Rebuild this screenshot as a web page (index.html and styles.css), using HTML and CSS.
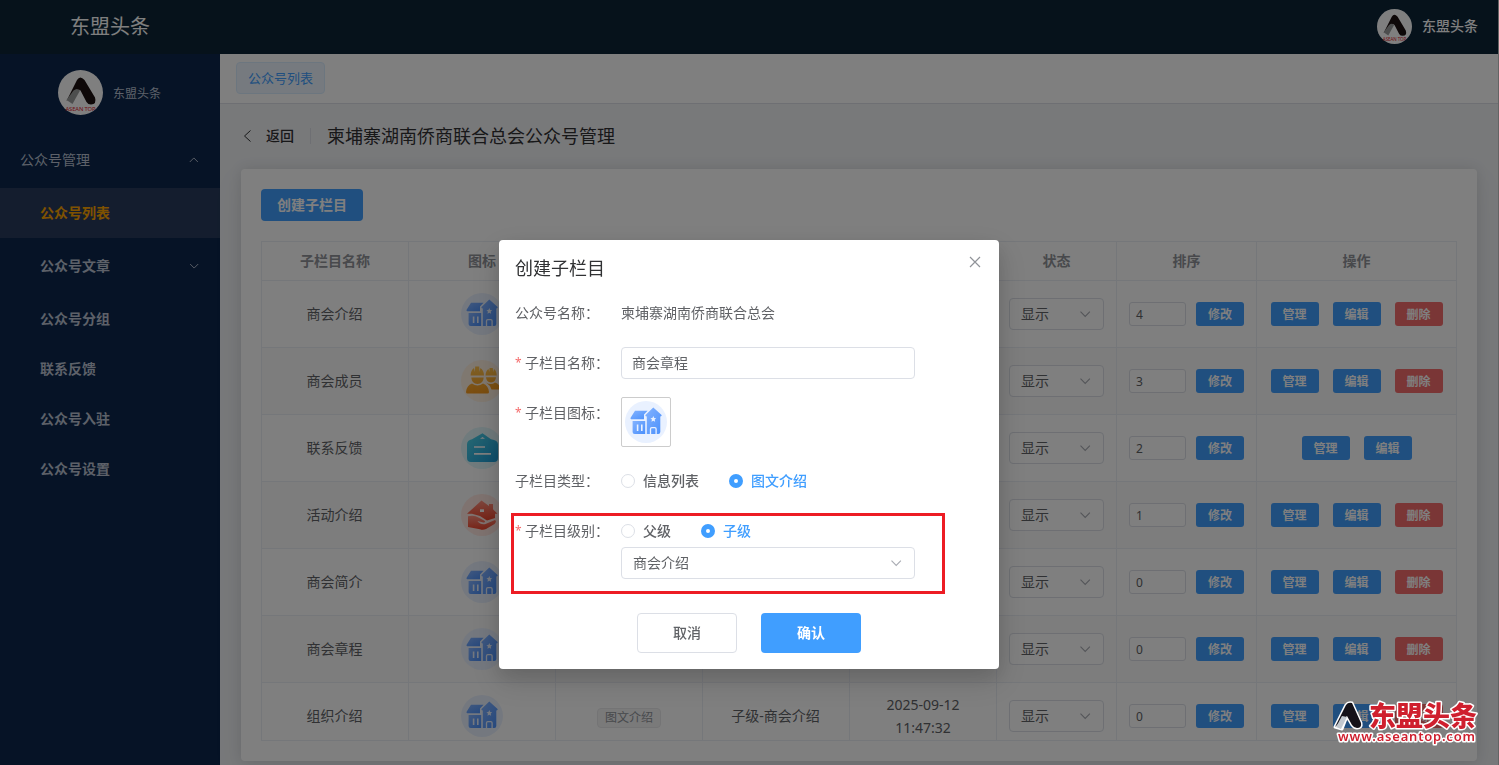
FILE: index.html
```html
<!DOCTYPE html>
<html lang="zh-CN">
<head>
  <meta charset="UTF-8" />
  <meta name="viewport" content="width=device-width, initial-scale=1.0"/>
  <title>东盟头条</title>
  <link rel="stylesheet" href="styles.css">
</head>
<body>
  <!-- 图标 -->
  <svg class="sprite" width="0" height="0">
    <defs>
      <linearGradient id="gBlue" x1="0" y1="0" x2="1" y2="1"><stop offset="0" stop-color="#84b3ff"/><stop offset="1" stop-color="#4a90fc"/></linearGradient>
      <linearGradient id="gYellow" x1="0" y1="0" x2="0" y2="1"><stop offset="0" stop-color="#ffc24d"/><stop offset="1" stop-color="#f79a1c"/></linearGradient>
      <linearGradient id="gTeal" x1="0" y1="0" x2="1" y2="1"><stop offset="0" stop-color="#4fd3e6"/><stop offset="1" stop-color="#1b9bd8"/></linearGradient>
      <linearGradient id="gRed" x1="0" y1="0" x2="0" y2="1"><stop offset="0" stop-color="#ff8f7d"/><stop offset="1" stop-color="#f0452b"/></linearGradient>
    </defs>
    <symbol id="house" viewBox="0 0 42 42">
      <circle cx="21" cy="21" r="21" fill="#e9f1ff"/>
      <path d="M10 9.7h12.6L19 13.5v4.7H6.2q-1-.3-.6-1.4z" fill="url(#gBlue)"/>
      <path d="M7.6 20h12.6v13H9.6q-2 0-2-2z" fill="url(#gBlue)"/>
      <path d="M12.6 23.5v6.5M16.8 23.5v6.5" stroke="#e9f1ff" stroke-width="1.6"/>
      <path d="M28.3 6.4 36.6 14q.5 1.3-1.3 1.4V31q0 2-2 2H21.8V15.4q-2-.2-1.3-1.4z" fill="url(#gBlue)"/>
      <path d="m28.3 15 .9 1.9 2 .3-1.5 1.4.4 2.1-1.8-1-1.8 1 .4-2.1-1.5-1.4 2-.3z" fill="#e9f1ff"/>
      <path d="M25.5 33v-5q0-1.3 1.3-1.3h3q1.3 0 1.3 1.3v5" fill="none" stroke="#e9f1ff" stroke-width="1.3"/>
    </symbol>
    <symbol id="people" viewBox="0 0 42 42">
      <circle cx="21" cy="21" r="21" fill="#fff0e0"/>
      <path d="M24.5 15.5q.3-5 3-6.5l.8 3 .3-4h3.2l.3 4 .9-3q2.500 1.500 2.700 6.500zM25 17.300h10q-.3 5-5 5.200-4.700-.2-5-5.200zM25 22.500q5 3 9 0 5 1.500 5.500 7h-9q-1.500-4.500-5.500-7z" fill="url(#gYellow)"/>
      <path d="M9.600 15.500q.2-5.500 3.400-7.500l.9 4 .3-5.400h4l.3 5.400.9-4q3.400 2 3.600 7.500zM10.300 17.500h12.400q-.4 6.300-6.200 6.500-5.800-.2-6.200-6.500zM11 23.500q5.500 4 11 0 5.500 2 6 8.500 0 1.600-1.500 1.600H6.500Q5 33.600 5 32q.5-6.500 6-8.500z" fill="url(#gYellow)"/>
    </symbol>
    <symbol id="board" viewBox="0 0 42 42">
      <circle cx="21" cy="21" r="21" fill="#e0f7fa"/>
      <path d="M21.500 6.300 30 12.200q7 1 7 5V31q0 4-4 4H10q-4 0-4-4V17.200q0-4 5-5z" fill="url(#gTeal)"/>
      <path d="m19 11.700 2.500-1.700 2.500 1.700z" fill="#fff"/>
      <path d="M13 20h11M13 26.900h17" stroke="#fff" stroke-width="1.600"/>
    </symbol>
    <symbol id="care" viewBox="0 0 42 42">
      <circle cx="21" cy="21" r="21" fill="#ffe6e0"/>
      <path d="m20.500 6.400 7.500 5.600v-2h4v5.300l4.500 4.500H34V24l-8 2.500-7-4.500-8-2.200H6z" fill="url(#gRed)"/>
      <path d="M19 15.300h4v2.700h-4z" fill="#fff"/>
      <path d="M7 22.300q6-1.800 11 1.500l5.500 3q1.500 1.800-1 1.700l-6-1.500q3 4 8 3L34 26q2 1-.5 4L25 35q-3 1.500-6 .3L7 33z" fill="url(#gRed)"/>
    </symbol>
    <symbol id="logo" viewBox="0 0 45 45">
      <circle cx="22.500" cy="22.500" r="22.500" fill="#fff"/>
      <path d="M8.500 31 19 10q3-5 7.500 0L37 27.500q2 6.500-4 7-3 0-4.500-2.500l-6-11.500q-1.500-1.500-3 0z" fill="#1d1010"/>
      <path d="M15.500 20.500q3.500-3 6.500 0L14.500 34l-6-4z" fill="#9b9d9c"/>
      <text x="22.500" y="40.800" text-anchor="middle" textLength="30" class="logo-text">ASEAN TOP</text>
    </symbol>
    <symbol id="down" viewBox="0 0 14 14">
      <path d="m2.500 4.700 4.700 4.700 4.700-4.700" fill="none" stroke="currentColor" stroke-width="1.100"/>
    </symbol>
  </svg>

  <div class="header">
    <div class="brand">东盟头条</div>
    <div class="user">
      <svg width="35" height="35"><use href="#logo"/></svg>
      <span>东盟头条</span>
    </div>
  </div>

  <div class="container">
    <div class="sidebar">
      <div class="profile">
        <svg width="45" height="45"><use href="#logo"/></svg>
        <span>东盟头条</span>
      </div>
      <div class="menu-title"><span>公众号管理</span><svg class="up" width="12" height="12"><use href="#down"/></svg></div>
      <div class="menu-item active"><span>公众号列表</span></div>
      <div class="menu-item tall"><span>公众号文章</span><svg width="12" height="12"><use href="#down"/></svg></div>
      <div class="menu-item"><span>公众号分组</span></div>
      <div class="menu-item"><span>联系反馈</span></div>
      <div class="menu-item"><span>公众号入驻</span></div>
      <div class="menu-item"><span>公众号设置</span></div>
    </div>

    <div class="main">
      <div class="tabs"><span class="tab">公众号列表</span></div>
      <div class="page-header">
        <svg width="16" height="16" viewBox="0 0 16 16"><path d="m11.500 2.500-6 5.500 6 5.500" fill="none" stroke="#303133"/></svg>
        <span class="back">返回</span>
        <span class="page-title">柬埔寨湖南侨商联合总会公众号管理</span>
      </div>

      <div class="card">
        <button class="btn create">创建子栏目</button>
        <div class="table-wrap">
          <table class="table">
            <colgroup>
              <col class="w147"><col class="w147"><col class="w147"><col class="w147"><col class="w147"><col class="w120"><col class="w140"><col class="w200">
            </colgroup>
            <thead>
              <tr><th>子栏目名称</th><th>图标</th><th>类型</th><th>级别</th><th>创建时间</th><th>状态</th><th>排序</th><th>操作</th></tr>
            </thead>
            <tbody>
              <tr>
                <td class="name">商会介绍</td><td><svg width="42" height="42"><use href="#house"/></svg></td><td></td><td></td><td></td>
                <td><div class="select">显示<svg width="14" height="14"><use href="#down"/></svg></div></td>
                <td><div class="sort"><span class="num">4</span><button class="btn small">修改</button></div></td>
                <td><div class="ops"><button class="btn small">管理</button><button class="btn small">编辑</button><button class="btn small danger">删除</button></div></td>
              </tr>
              <tr>
                <td class="name">商会成员</td><td><svg width="42" height="42"><use href="#people"/></svg></td><td></td><td></td><td></td>
                <td><div class="select">显示<svg width="14" height="14"><use href="#down"/></svg></div></td>
                <td><div class="sort"><span class="num">3</span><button class="btn small">修改</button></div></td>
                <td><div class="ops"><button class="btn small">管理</button><button class="btn small">编辑</button><button class="btn small danger">删除</button></div></td>
              </tr>
              <tr>
                <td class="name">联系反馈</td><td><svg width="42" height="42"><use href="#board"/></svg></td><td></td><td></td><td></td>
                <td><div class="select">显示<svg width="14" height="14"><use href="#down"/></svg></div></td>
                <td><div class="sort"><span class="num">2</span><button class="btn small">修改</button></div></td>
                <td><div class="ops"><button class="btn small">管理</button><button class="btn small">编辑</button></div></td>
              </tr>
              <tr>
                <td class="name">活动介绍</td><td><svg width="42" height="42"><use href="#care"/></svg></td><td></td><td></td><td></td>
                <td><div class="select">显示<svg width="14" height="14"><use href="#down"/></svg></div></td>
                <td><div class="sort"><span class="num">1</span><button class="btn small">修改</button></div></td>
                <td><div class="ops"><button class="btn small">管理</button><button class="btn small">编辑</button><button class="btn small danger">删除</button></div></td>
              </tr>
              <tr>
                <td class="name">商会简介</td><td><svg width="42" height="42"><use href="#house"/></svg></td><td></td><td></td><td></td>
                <td><div class="select">显示<svg width="14" height="14"><use href="#down"/></svg></div></td>
                <td><div class="sort"><span class="num">0</span><button class="btn small">修改</button></div></td>
                <td><div class="ops"><button class="btn small">管理</button><button class="btn small">编辑</button><button class="btn small danger">删除</button></div></td>
              </tr>
              <tr>
                <td class="name">商会章程</td><td><svg width="42" height="42"><use href="#house"/></svg></td><td></td><td></td><td></td>
                <td><div class="select">显示<svg width="14" height="14"><use href="#down"/></svg></div></td>
                <td><div class="sort"><span class="num">0</span><button class="btn small">修改</button></div></td>
                <td><div class="ops"><button class="btn small">管理</button><button class="btn small">编辑</button><button class="btn small danger">删除</button></div></td>
              </tr>
              <tr>
                <td class="name">组织介绍</td><td><svg width="42" height="42"><use href="#house"/></svg></td>
                <td><span class="tag">图文介绍</span></td><td class="name">子级-商会介绍</td><td>2025-09-12<br>11:47:32</td>
                <td><div class="select">显示<svg width="14" height="14"><use href="#down"/></svg></div></td>
                <td><div class="sort"><span class="num">0</span><button class="btn small">修改</button></div></td>
                <td><div class="ops"><button class="btn small">管理</button><button class="btn small">编辑</button><button class="btn small danger">删除</button></div></td>
              </tr>
            </tbody>
          </table>
        </div>
      </div>
    </div>
  </div>

  <!-- 弹窗 -->
  <div class="overlay">
    <div class="dialog">
      <div class="dialog-header">
        <span>创建子栏目</span>
        <svg width="16" height="16" viewBox="0 0 16 16"><path d="m3 3 10 10M13 3 3 13" stroke="#909399" stroke-width="1.200"/></svg>
      </div>
      <div class="form-item">
        <div class="label">公众号名称：</div>
        <div class="content">柬埔寨湖南侨商联合总会</div>
      </div>
      <div class="form-item">
        <div class="label"><i>*</i>子栏目名称：</div>
        <div class="content"><div class="input">商会章程</div></div>
      </div>
      <div class="form-item">
        <div class="label"><i>*</i>子栏目图标：</div>
        <div class="content"><div class="upload"><svg width="42" height="42"><use href="#house"/></svg></div></div>
      </div>
      <div class="form-item">
        <div class="label">子栏目类型：</div>
        <div class="content radios">
          <label class="radio"><b></b>信息列表</label>
          <label class="radio checked"><b></b>图文介绍</label>
        </div>
      </div>
      <div class="form-item">
        <div class="label"><i>*</i>子栏目级别：</div>
        <div class="content">
          <div class="radios">
            <label class="radio"><b></b>父级</label>
            <label class="radio checked"><b></b>子级</label>
          </div>
          <div class="input parent">商会介绍<svg width="14" height="14"><use href="#down"/></svg></div>
        </div>
      </div>
      <div class="dialog-footer">
        <button class="btn large plain">取消</button>
        <button class="btn large">确认</button>
      </div>
      <div class="mark"></div>
    </div>
  </div>

  <!-- 水印 -->
  <svg class="watermark" width="150" height="50" viewBox="0 0 150 50">
    <g stroke="#fff" stroke-width="3" stroke-linejoin="round">
      <path d="M4 27 15 5q2-3 6-2l9 20q1 5-4 5-3 0-5-3l-5-9-5 13z" fill="#fff"/>
    </g>
    <path d="M4 27 15 5q2-3 6-2l9 20q1 5-4 5-3 0-5-3l-5-9z" fill="#151218"/>
    <path d="m11 16 5 1-6 12-5-2z" fill="#c3c9cf"/>
    <text class="wm-name" x="38" y="26" textLength="108">东盟头条</text>
    <text class="wm-url" x="7" y="40.500" textLength="137">www.aseantop.com</text>
  </svg>
</body>
</html>
```
FILE: styles.css
```css
* {
  box-sizing: border-box;
}
body {
  margin: 0;
  height: 765px;
  overflow: hidden;
  border-right: 1px solid #c8c8c8;
  font-family: "Noto Sans", "Noto Sans CJK SC", sans-serif;
  font-size: 14px;
  color: #606266;
}
svg {
  display: block;
  flex-shrink: 0;
}
.sprite {
  position: absolute;
}
.logo-text {
  font-size: 5.8px;
  fill: #e0202a;
}
.header {
  height: 54px;
  padding: 0 20px 2px 70px;
  display: flex;
  justify-content: space-between;
  align-items: center;
  background: #0c2437;
  color: #fff;
}
.brand {
  padding-bottom: 1px;
  font-size: 20px;
}
.user {
  display: flex;
  align-items: center;
  gap: 10px;
}
.user span {
  padding-bottom: 2px;
  font-weight: 500;
}
.container {
  display: flex;
  height: 711px;
}
.sidebar {
  width: 220px;
  flex-shrink: 0;
  background: #0c264c;
  color: #bac2d2;
}
.profile {
  height: 78px;
  padding: 16px 0 0 58px;
  display: flex;
  align-items: flex-start;
  gap: 10px;
  font-size: 12px;
}
.profile span {
  line-height: 48px;
}
.menu-title,
.menu-item {
  display: flex;
  align-items: center;
  justify-content: space-between;
  height: 50px;
  padding: 0 20px 0 40px;
  font-weight: 700;
}
.menu-title span,
.menu-item span {
  padding-bottom: 2px;
}
.menu-title {
  height: 56px;
  padding-left: 20px;
  font-weight: 400;
}
.menu-item.tall {
  height: 56px;
}
.menu-item.active {
  background: #283b5c;
  color: #ffa500;
}
.up {
  transform: rotate(180deg);
}
.main {
  flex: 1;
  background: #f0f2f5;
}
.tabs {
  height: 50px;
  padding: 8px 16px;
  background: #fff;
  border-bottom: 1px solid #dcdfe6;
}
.tab {
  display: inline-block;
  height: 32px;
  line-height: 30px;
  padding: 0 11px;
  font-size: 13px;
  color: #409eff;
  background: #ecf5ff;
  border: 1px solid #d9ecff;
  border-radius: 4px;
}
.page-header {
  height: 65px;
  padding: 0 0 2px 19px;
  display: flex;
  align-items: center;
  color: #303133;
}
.back {
  margin-left: 11px;
  padding-right: 16px;
  font-weight: 500;
  line-height: 16px;
  border-right: 1px solid #dcdfe6;
}
.page-title {
  margin-left: 16px;
  padding-bottom: 1px;
  font-size: 18px;
}
.card {
  margin: 0 21px;
  height: 592px;
  padding: 20px;
  background: #fff;
  border-radius: 4px;
  box-shadow: 0 12px 32px 4px rgba(0, 0, 0, 0.04), 0 0 14px rgba(0, 0, 0, 0.1);
}
.btn {
  display: block;
  border: none;
  border-radius: 4px;
  padding: 0 0 2px;
  background: #409eff;
  color: #fff;
  font-family: inherit;
  font-size: 14px;
  font-weight: 700;
}
.btn.create {
  width: 102px;
  height: 32px;
}
.btn.small {
  width: 48px;
  height: 24px;
  padding: 0;
  font-size: 12px;
  border-radius: 3px;
}
.btn.danger {
  background: #f56c6c;
}
.btn.large {
  width: 100px;
  height: 40px;
}
.btn.plain {
  background: #fff;
  border: 1px solid #dcdfe6;
  color: #606266;
  font-weight: 500;
}
.table-wrap {
  margin-top: 20px;
  width: 1196px;
  height: 500px;
  overflow: hidden;
  border: 1px solid #ebeef5;
  border-right: none;
}
.table {
  width: 1195px;
  table-layout: fixed;
  border-spacing: 0;
  text-align: center;
  line-height: 23px;
}
.w147 { width: 147px; }
.w120 { width: 120px; }
.w140 { width: 140px; }
.w200 { width: 200px; }
th {
  height: 39px;
  padding: 0 0 2px;
  color: #909399;
  font-weight: 700;
  border-right: 1px solid #ebeef5;
  border-bottom: 1px solid #ebeef5;
}
td {
  height: 67px;
  padding: 0 12px;
  border-right: 1px solid #ebeef5;
  border-bottom: 1px solid #ebeef5;
}
td.name {
  padding: 0 13px 2px 12px;
}
tbody tr:nth-child(even) td {
  background: #fafafa;
}
td > svg {
  margin: 0 auto;
}
.select {
  display: flex;
  justify-content: space-between;
  width: 95px;
  height: 32px;
  line-height: 29px;
  padding: 0 11px;
  border: 1px solid #dcdfe6;
  border-radius: 4px;
  background: #fff;
}
.select svg {
  margin-top: 8px;
}
.select svg,
.input svg {
  color: #a8abb2;
}
.sort {
  display: flex;
  gap: 10px;
}
.num {
  width: 57px;
  height: 24px;
  line-height: 24px;
  padding-left: 6px;
  text-align: left;
  font-size: 12px;
  border: 1px solid #dcdfe6;
  border-radius: 3px;
  background: #fff;
}
.ops {
  display: flex;
  justify-content: center;
  gap: 14px;
}
.tag {
  display: inline-block;
  height: 20px;
  line-height: 18px;
  padding: 0 7px;
  font-size: 12px;
  color: #909399;
  background: #f4f4f5;
  border: 1px solid #e9e9eb;
  border-radius: 4px;
}

.overlay {
  position: fixed;
  top: 0;
  right: 0;
  bottom: 0;
  left: 0;
  display: flex;
  justify-content: center;
  align-items: flex-start;
  padding: 240px 1px 0 0;
  background: rgba(0, 0, 0, 0.5);
}
.dialog {
  position: relative;
  width: 500px;
  height: 429px;
  padding: 16px;
  background: #fff;
  border-radius: 4px;
  box-shadow: 0 12px 32px 4px rgba(0, 0, 0, 0.1), 0 8px 20px rgba(0, 0, 0, 0.12);
}
.dialog-header {
  display: flex;
  justify-content: space-between;
  height: 41px;
  line-height: 24px;
  font-size: 18px;
  color: #303133;
}
.dialog-header svg {
  margin: -2px 0 0;
}
.form-item {
  display: flex;
  margin-bottom: 18px;
  line-height: 32px;
}
.label {
  display: flex;
  width: 106px;
  height: 32px;
  flex-shrink: 0;
}
.label i {
  width: 6px;
  margin-right: 4px;
  font-size: 12px;
  font-style: normal;
  color: #f56c6c;
}
.input {
  display: flex;
  justify-content: space-between;
  align-items: center;
  width: 294px;
  height: 32px;
  padding: 0 10px;
  border: 1px solid #dcdfe6;
  border-radius: 4px;
}
.input.parent {
  padding: 0 11px;
}
.upload {
  display: flex;
  justify-content: center;
  align-items: center;
  width: 50px;
  height: 50px;
  border: 1px solid #ccc;
  border-radius: 2px;
}
.radios {
  display: flex;
  gap: 30px;
}
.radio {
  display: flex;
  align-items: center;
  gap: 8px;
  font-weight: 500;
}
.radio b {
  width: 14px;
  height: 14px;
  border: 1px solid #dcdfe6;
  border-radius: 50%;
}
.radio.checked {
  color: #409eff;
}
.radio.checked b {
  border: 5px solid #409eff;
}
.dialog-footer {
  display: flex;
  justify-content: center;
  gap: 24px;
  padding-top: 16px;
}
/* 红框标注 */
.mark {
  position: absolute;
  left: 12px;
  top: 273px;
  width: 434px;
  height: 81px;
  border: 3px solid #ed1c24;
}
.watermark {
  position: fixed;
  left: 1331px;
  top: 700px;
}
.wm-name,
.wm-url {
  fill: #cf1f2e;
  stroke: #fff;
  stroke-width: 3px;
  stroke-linejoin: round;
  paint-order: stroke;
  font-weight: 900;
}
.wm-name {
  font-size: 27px;
}
.wm-url {
  font-size: 13px;
  font-weight: 600;
}
```
